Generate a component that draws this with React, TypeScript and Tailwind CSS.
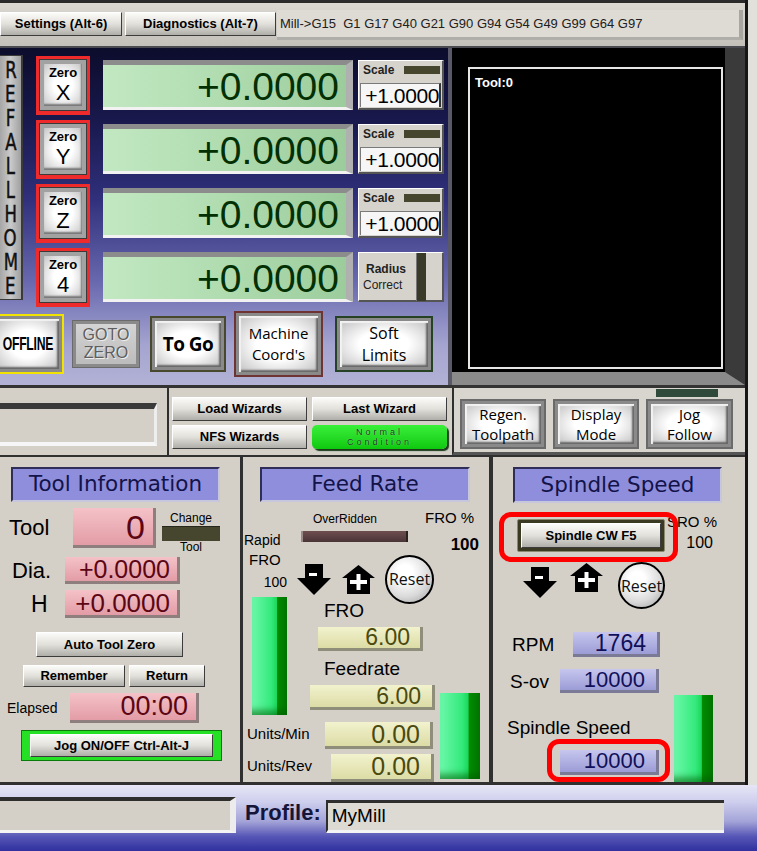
import React from 'react'

type Kids = { children?: React.ReactNode; className?: string }

function Btn({ children, className = '' }: Kids) {
  return (
    <div className={`flex items-center justify-center whitespace-nowrap text-[13px] font-bold text-black bg-linear-to-b from-[#fbfbf9] via-[#e2e0da] to-[#b0aea8] border border-t-white border-l-white border-r-[#3c3c3c] border-b-[#3c3c3c] ${className}`}>
      {children}
    </div>
  )
}

// framed glossy button used on the DRO screen
function SoftBtn({ children, className = '' }: Kids) {
  return (
    <div className={`p-[3px] bg-[#8a8a8a] border-2 ${className}`}>
      <div className="w-full h-full flex flex-col items-center justify-center text-black bg-[radial-gradient(ellipse_at_center,#ffffff_40%,#c0c0c0_100%)] shadow-[inset_2px_2px_1px_#f2f2f2,inset_-2px_-2px_2px_#666666]">
        {children}
      </div>
    </div>
  )
}

const tones = {
  pink: 'bg-linear-to-b from-[#f4c2c8] to-[#e39ca6] text-[#5c0614] border-[#8e7e7e]',
  yellow: 'bg-linear-to-b from-[#f2f2ce] to-[#dcdca6] text-[#4a4a10] border-[#8e8e7a]',
  blue: 'bg-linear-to-b from-[#c6c6ee] to-[#9c9cd6] text-[#10105a] border-[#7a7a96]',
}

function Field({ tone, children, className = '' }: Kids & { tone: keyof typeof tones }) {
  return (
    <div className={`flex items-center justify-end leading-none border-r-[3px] border-b-[3px] ${tones[tone]} ${className}`}>
      {children}
    </div>
  )
}

function Title({ children, className = '' }: Kids) {
  return (
    <div className={`h-[35px] flex items-center justify-center bg-[#8e8edc] border-2 border-t-[#2e2e58] border-l-[#2e2e58] border-r-[#c6c6dc] border-b-[#c6c6dc] font-['DejaVu_Sans',sans-serif] text-[21.5px] text-[#13134a] whitespace-nowrap ${className}`}>
      {children}
    </div>
  )
}

function GreenBar({ className = '' }: Kids) {
  return (
    <div className={`bg-[linear-gradient(90deg,#6cf8aa_0%,#34ea7c_55%,#1cd85c_70%,#008c00_73%,#007400_100%)] shadow-[inset_0_-10px_6px_-5px_rgba(0,90,0,0.55)] ${className}`} />
  )
}

function DownArrow({ className = '' }: Kids) {
  return (
    <svg className={className} width="34" height="31" viewBox="0 0 34 31">
      <path d="M8 0H26V14H34L17 31L0 14H8Z" fill="#000" />
      <rect x="12" y="9" width="8" height="3" fill="#fff" />
    </svg>
  )
}

function UpArrow({ className = '' }: Kids) {
  return (
    <svg className={className} width="33" height="29" viewBox="0 0 33 29">
      <path d="M16.5 0L33 13H28V29H5V13H0Z" fill="#000" />
      <path d="M14.5 9H18.5V15H25V19H18.5V25H14.5V19H8V15H14.5Z" fill="#fff" />
    </svg>
  )
}

function Reset({ className = '' }: Kids) {
  return (
    <div className={`rounded-full border-2 border-black bg-[radial-gradient(circle_at_40%_35%,#ffffff_20%,#dadada_60%,#9a9a9a_100%)] flex items-center justify-center text-[16px] text-[#111] font-['Open_Sans',sans-serif] ${className}`}>
      Reset
    </div>
  )
}

function ZeroBtn({ axis }: { axis: string }) {
  return (
    <div className="h-[59px] w-[54px] border-[3px] border-b-[4px] border-[#ee2a2a] bg-[#3a3a3a] p-[1px]">
      <div className="h-full bg-[#a2a2a2] p-[4px]">
        <div className="h-full flex flex-col items-center justify-center bg-[radial-gradient(ellipse_at_center,#ffffff_35%,#c6c6c6_100%)] shadow-[inset_-1px_-2px_2px_#777] text-black">
          <span className="text-[13px] leading-[15px] font-bold">Zero</span>
          <span className="text-[22px] leading-[25px]">{axis}</span>
        </div>
      </div>
    </div>
  )
}

function Dro() {
  return (
    <div className="h-[50px] w-[250px] bg-[linear-gradient(90deg,#c2e8c2_0%,#b0dcb0_50%,#9ccc9c_100%)] border-t-[5px] border-t-[#8c8c8c] border-r-[7px] border-r-[#b0b0b0] border-b-[3px] border-b-[#f2f2f2] flex items-center justify-end pr-[7px] text-[39px] leading-none text-[#023002]">
      +0.0000
    </div>
  )
}

function ScaleBox() {
  return (
    <div className="h-[50px] w-[86px] bg-[#d6d3cc] border-t border-l border-t-white border-l-white border-r-2 border-b-2 border-r-[#555] border-b-[#555] pl-[1px] pt-[2px] flex flex-col">
      <div className="flex items-center h-[14px]">
        <span className="text-[12px] leading-none font-bold text-[#222] ml-[3px]">Scale</span>
        <span className="ml-auto mr-[2px] w-[36px] h-[8px] bg-[#46462e]" />
      </div>
      <div className="mt-[6px] w-[81px] h-[24px] bg-[#f6f6f6] border-t border-l border-[#7a7a7a] border-r-2 border-r-[#333] flex items-center justify-end text-[21px] leading-none tracking-[-0.4px] text-black">
        +1.0000
      </div>
    </div>
  )
}

function RadiusBox() {
  return (
    <div className="h-[50px] w-[86px] bg-[#d6d3cc] border-t border-l border-t-white border-l-white border-r-2 border-b-2 border-r-[#555] border-b-[#555] flex items-center">
      <div className="flex flex-col ml-[4px] text-[12px] leading-[16px] text-[#222]">
        <span className="font-bold ml-[3px]">Radius</span>
        <span>Correct</span>
      </div>
      <span className="ml-auto mr-[16px] w-[10px] h-[48px] bg-[#3a3a28] border-l border-[#777]" />
    </div>
  )
}

export default function App() {
  return (
    <div className="w-[757px] h-[851px] overflow-hidden bg-[#d4d0c8] flex flex-col font-['Liberation_Sans',Arial,sans-serif] text-black">
      <div className="flex h-[785px]">
        <div className="w-[745px] flex flex-col">
          {/* top bar */}
          <div className="h-[48px] shrink-0 border-t-[3px] border-[#2a2a2a] border-b-2 border-b-[#4a4a50] bg-linear-to-b from-[#dad7d0] to-[#c4c1ba] flex items-start pt-[9px]">
            <Btn className="w-[122px] h-[24px]">Settings (Alt-6)</Btn>
            <Btn className="w-[151px] h-[24px] ml-[3px]">Diagnostics (Alt-7)</Btn>
            <div className="ml-[1px] -mt-[2px] h-[30px] w-[466px] bg-[#dedbd4] border-r-[4px] border-r-[#a8a6a0] border-b-[3px] border-b-[#b0aea8] flex items-center pl-[3px] text-[13px] text-[#202020] whitespace-nowrap">
              Mill-&gt;G15&nbsp; G1&nbsp;G17 G40 G21 G90 G94 G54 G49 G99 G64 G97
            </div>
          </div>

          {/* DRO + toolpath */}
          <div className="h-[337px] shrink-0 flex">
            <div className="w-[452px] border-r-[4px] border-[#585868] bg-[linear-gradient(180deg,#0c0c2c_0%,#19194e_22%,#30307c_45%,#6a6ab0_70%,#a4a4d0_88%,#b2b2d6_100%)] flex flex-col overflow-hidden">
              <div className="flex items-start pt-[7px]">
                <div className="w-[23px] h-[245px] bg-linear-to-r from-[#a6a6a6] via-[#cacaca] to-[#a0a0a0] border-y border-r-2 border-[#3a3a3a] flex flex-col items-center justify-center font-['DejaVu_Sans',sans-serif] text-[23px] leading-[24px] text-[#111]">
                  {'REFALLHOME'.split('').map((c, i) => (
                    <span key={i} className="inline-block scale-x-[0.72] [-webkit-text-stroke:0.5px_#111]">{c}</span>
                  ))}
                </div>
                <div className="ml-[13px] mt-[1px] flex flex-col gap-[5px]">
                  <ZeroBtn axis="X" />
                  <ZeroBtn axis="Y" />
                  <ZeroBtn axis="Z" />
                  <ZeroBtn axis="4" />
                </div>
                <div className="ml-[13px] mt-[5px] flex flex-col gap-[14px]">
                  <Dro />
                  <Dro />
                  <Dro />
                  <Dro />
                </div>
                <div className="ml-[5px] mt-[5px] flex flex-col gap-[14px]">
                  <ScaleBox />
                  <ScaleBox />
                  <ScaleBox />
                  <RadiusBox />
                </div>
              </div>

              <div className="mt-[3px] h-[68px] flex items-center">
                <SoftBtn className="-ml-[8px] w-[72px] h-[60px] border-[#f2e200]">
                  <span className="inline-block font-bold text-[18px] scale-x-[0.68] tracking-tight">OFFLINE</span>
                </SoftBtn>
                <div className="ml-[8px] w-[68px] h-[48px] bg-[#8a8a8a] p-[3px] border border-[#6a6a6a]">
                  <div className="w-full h-full flex flex-col items-center justify-center bg-linear-to-b from-[#d4d4d4] to-[#bcbcbc] text-[16px] leading-[18px] text-[#5e5e5e] [text-shadow:1px_1px_0_#eeeeee]">
                    <span>GOTO</span>
                    <span>ZERO</span>
                  </div>
                </div>
                <SoftBtn className="ml-[10px] w-[76px] h-[56px] border-[#48482c]">
                  <span className="font-['Open_Sans',sans-serif] font-bold text-[19px] tracking-[-0.5px]">To Go</span>
                </SoftBtn>
                <SoftBtn className="ml-[8px] w-[89px] h-[66px] border-[#6e3434]">
                  <span className="font-['Open_Sans',sans-serif] text-[15px] leading-[21px]">Machine</span>
                  <span className="font-['Open_Sans',sans-serif] text-[15px] leading-[21px]">Coord's</span>
                </SoftBtn>
                <SoftBtn className="ml-[12px] w-[98px] h-[56px] border-[#254225]">
                  <span className="font-['Open_Sans',sans-serif] text-[16px] leading-[22px]">Soft</span>
                  <span className="font-['Open_Sans',sans-serif] text-[16px] leading-[22px]">Limits</span>
                </SoftBtn>
              </div>
            </div>

            <div className="w-[293px] bg-black border-r-[20px] border-r-[#3a3a3a] border-b-[13px] border-b-[#8a8a8a] pt-[19px] pl-[16px]">
              <div className="w-[255px] h-[302px] border-2 border-[#e6e6e6] px-[5px] pt-[4px] text-[13px] font-bold text-white">
                Tool:0
              </div>
            </div>
          </div>

          {/* wizards strip */}
          <div className="h-[70px] shrink-0 flex border-t-[3px] border-[#333]">
            <div className="w-[167px]">
              <div className="mt-[15px] w-[157px] h-[43px] bg-[#d4d0c8] border-t-[6px] border-t-[#3a3a3a] border-b-[4px] border-b-[#f6f6f6] border-r-[3px] border-r-[#eeeeee]" />
            </div>
            <div className="w-[285px] border-l-2 border-[#2e2e2e] pl-[3px] pt-[9px] grid grid-cols-[135px_135px] grid-rows-[24px_24px] gap-x-[5px] gap-y-[4px]">
              <Btn>Load Wizards</Btn>
              <Btn>Last Wizard</Btn>
              <Btn>NFS Wizards</Btn>
              <div className="rounded-[5px] bg-linear-to-b from-[#38f038] to-[#0cc80c] shadow-[2px_2px_1px_#1a3a1a] flex flex-col items-center justify-center text-[9px] leading-[10.5px] tracking-[3px] text-[#163216] [text-shadow:0_0_1px_#9cff9c]">
                <span>Normal</span>
                <span>Condition</span>
              </div>
            </div>
            <div className="w-[293px] border-l-2 border-[#2e2e2e] bg-[#d8d5ce] border-b-[3px] border-b-[#555] flex flex-col">
              <div className="mt-[1px] ml-[202px] w-[62px] h-[8px] bg-[#2f4a3a]" />
              <div className="mt-[2px] flex font-['Open_Sans',sans-serif] text-[15px] leading-[20.5px]">
                <SoftBtn className="ml-[6px] w-[86px] h-[50px] border-[#6a6a6a]">
                  <span>Regen.</span>
                  <span>Toolpath</span>
                </SoftBtn>
                <SoftBtn className="ml-[7px] w-[86px] h-[50px] border-[#6a6a6a]">
                  <span>Display</span>
                  <span>Mode</span>
                </SoftBtn>
                <SoftBtn className="ml-[7px] w-[87px] h-[50px] border-[#6a6a6a]">
                  <span>Jog</span>
                  <span>Follow</span>
                </SoftBtn>
              </div>
            </div>
          </div>

          {/* bottom panels */}
          <div className="h-[330px] shrink-0 flex border-t-2 border-[#303030] border-b-[3px] border-b-[#303030]">
            {/* Tool information */}
            <div className="w-[240px] flex flex-col">
              <Title className="mt-[10px] ml-[11px] w-[209px]">Tool Information</Title>
              <div className="flex items-start h-[40px] mt-[6px]">
                <span className="ml-[9px] w-[64px] text-[22px] leading-[40px]">Tool</span>
                <Field tone="pink" className="w-[83px] h-[40px] pr-[8px] text-[34px]">0</Field>
                <div className="ml-[6px] mt-[3px] flex flex-col items-center">
                  <span className="text-[12px] leading-[14px]">Change</span>
                  <span className="mt-[1px] w-[58px] h-[15px] bg-[#46462e] border-t border-[#26261a]" />
                  <span className="text-[12px] leading-[12px]">Tool</span>
                </div>
              </div>
              <div className="flex items-center h-[27px] mt-[9px]">
                <span className="ml-[12px] w-[53px] text-[22px] leading-none">Dia.</span>
                <Field tone="pink" className="w-[115px] h-[27px] pr-[7px] text-[25px]">+0.0000</Field>
              </div>
              <div className="flex items-center h-[28px] mt-[6px]">
                <span className="ml-[31px] w-[34px] text-[23px] leading-none">H</span>
                <Field tone="pink" className="w-[115px] h-[28px] pr-[7px] text-[26px]">+0.0000</Field>
              </div>
              <Btn className="mt-[14px] ml-[36px] w-[147px] h-[25px]">Auto Tool Zero</Btn>
              <div className="flex mt-[8px]">
                <Btn className="ml-[23px] w-[102px] h-[22px]">Remember</Btn>
                <Btn className="ml-[4px] w-[76px] h-[22px]">Return</Btn>
              </div>
              <div className="flex items-center h-[30px] mt-[6px]">
                <span className="ml-[7px] w-[63px] text-[14px] leading-none">Elapsed</span>
                <Field tone="pink" className="w-[129px] h-[30px] pr-[8px] text-[27px]">00:00</Field>
              </div>
              <div className="mt-[7px] ml-[21px] w-[201px] h-[31px] bg-[#26e026] border border-[#0a7a0a] px-[8px] py-[3px]">
                <Btn className="w-full h-full">Jog ON/OFF Ctrl-Alt-J</Btn>
              </div>
            </div>

            {/* Feed rate */}
            <div className="w-[249px] border-l-[3px] border-[#303030] flex flex-col">
              <Title className="mt-[10px] ml-[17px] w-[210px]">Feed Rate</Title>
              <div className="flex h-[102px]">
                <div className="w-[51px] flex flex-col pt-[29px] text-[15px] leading-[19px]">
                  <span className="pl-[1px] text-[14px]">Rapid</span>
                  <span className="pl-[6px]">FRO</span>
                  <span className="self-end pr-[7px] mt-[5px] text-[14px] leading-[16px]">100</span>
                </div>
                <div className="flex flex-col">
                  <div className="flex h-[52px]">
                    <div className="ml-[7px] w-[107px] flex flex-col">
                      <span className="mt-[10px] ml-[12px] text-[12px] leading-[14px]">OverRidden</span>
                      <span className="mt-[5px] h-[11px] w-[107px] bg-linear-to-b from-[#6e4e50] to-[#4a3436] border-l-2 border-l-[#9a8a8a] border-r-2 border-r-[#2a2020]" />
                    </div>
                    <div className="ml-[17px] w-[54px] flex flex-col">
                      <span className="mt-[7px] text-[15px] leading-[18px]">FRO %</span>
                      <span className="self-end mt-[8px] text-[17px] font-bold leading-[19px]">100</span>
                    </div>
                  </div>
                  <div className="flex items-center h-[50px]">
                    <DownArrow className="ml-[3px]" />
                    <UpArrow className="ml-[11px]" />
                    <Reset className="ml-[10px] w-[49px] h-[49px]" />
                  </div>
                </div>
              </div>
              <div className="flex">
                <div className="w-[67px] flex flex-col text-[15px] leading-[20px] whitespace-nowrap">
                  <GreenBar className="ml-[9px] -mt-[7px] w-[35px] h-[118px]" />
                  <span className="mt-[9px] pl-[4px]">Units/Min</span>
                  <span className="mt-[12px] pl-[4px]">Units/Rev</span>
                </div>
                <div className="w-[127px] flex flex-col">
                  <span className="-mt-[5px] ml-[14px] text-[19px] leading-[24px]">FRO</span>
                  <Field tone="yellow" className="mt-[4px] ml-[8px] w-[105px] h-[24px] pr-[10px] text-[23px]">6.00</Field>
                  <span className="mt-[6px] ml-[14px] text-[19px] leading-[24px]">Feedrate</span>
                  <Field tone="yellow" className="mt-[4px] w-[125px] h-[25px] pr-[11px] text-[23px]">6.00</Field>
                  <Field tone="yellow" className="mt-[12px] ml-[15px] w-[108px] h-[27px] pr-[10px] text-[25px]">0.00</Field>
                  <Field tone="yellow" className="mt-[5px] ml-[21px] w-[103px] h-[28px] pr-[11px] text-[25px]">0.00</Field>
                </div>
                <GreenBar className="ml-[3px] mt-[89px] w-[40px] h-[86px]" />
              </div>
            </div>

            {/* Spindle speed */}
            <div className="relative w-[256px] border-l-4 border-[#303030] flex flex-col">
              <Title className="mt-[10px] ml-[20px] w-[209px] h-[36px]">Spindle Speed</Title>
              <div className="flex items-start">
                <div className="ml-[24px] mt-[16px] w-[148px] h-[33px] bg-[#3a3a22] p-[3px] rounded-[2px] border border-[#8a8a70]">
                  <Btn className="w-full h-full">Spindle CW F5</Btn>
                </div>
                <div className="ml-[2px] w-[50px] flex flex-col text-[15px]">
                  <span className="mt-[10px] leading-[18px]">SRO %</span>
                  <span className="self-end pr-[4px] mt-[3px] text-[16px] leading-[18px]">100</span>
                </div>
              </div>
              <div className="mt-[10px] h-[47px] flex items-start">
                <DownArrow className="ml-[30px] mt-[5px]" />
                <UpArrow className="ml-[13px] mt-[1px]" />
                <Reset className="ml-[15px] w-[47px] h-[47px]" />
              </div>
              <div className="mt-[23px] h-[25px] flex items-center">
                <span className="ml-[19px] w-[61px] text-[19px] leading-none">RPM</span>
                <Field tone="blue" className="w-[87px] h-[25px] pr-[11px] text-[23px]">1764</Field>
              </div>
              <div className="flex">
                <div className="w-[181px] flex flex-col">
                  <div className="mt-[12px] h-[24px] flex items-center">
                    <span className="ml-[17px] w-[50px] text-[19px] leading-none">S-ov</span>
                    <Field tone="blue" className="w-[99px] h-[24px] pr-[11px] text-[22px]">10000</Field>
                  </div>
                  <span className="mt-[24px] ml-[14px] text-[19px] leading-[22px]">Spindle Speed</span>
                  <Field tone="blue" className="mt-[11px] ml-[67px] w-[99px] h-[25px] pr-[11px] text-[22px]">10000</Field>
                </div>
                <GreenBar className="mt-[38px] w-[39px] h-[87px]" />
              </div>

              {/* red highlight rings */}
              <div className="absolute left-[6px] top-[55px] w-[179px] h-[50px] rounded-[12px] border-[5px] border-[#ff0000]" />
              <div className="absolute left-[54px] top-[282px] w-[123px] h-[43px] rounded-[12px] border-[5px] border-[#ff0000]" />
            </div>
          </div>
        </div>
        <div className="w-[12px] border-l-[3px] border-[#161616] bg-[#e2e0da]" />
      </div>

      {/* profile bar */}
      <div className="h-[66px] shrink-0 bg-[linear-gradient(180deg,#e6e6f6_0%,#cfcfee_25%,#a4a4d8_55%,#5656b6_78%,#3030a0_100%)] flex items-start">
        <div className="mt-[12px] w-[236px] h-[36px] bg-[#d4d0c8] border-t-[4px] border-t-[#2e2e2e] border-b-[3px] border-b-[#f4f4f4] border-r-[6px] border-r-[#ececec]" />
        <span className="ml-[9px] mt-[14px] text-[22px] font-bold text-[#15153a] leading-[28px]">Profile:</span>
        <div className="ml-[5px] mt-[15px] w-[398px] h-[33px] bg-[#dddad3] border-t-[3px] border-t-[#2e2e2e] border-l-2 border-l-[#2e2e2e] border-b-[3px] border-b-[#f4f4f4] flex items-center pl-[4px] text-[19px] text-black">
          MyMill
        </div>
      </div>
    </div>
  )
}
